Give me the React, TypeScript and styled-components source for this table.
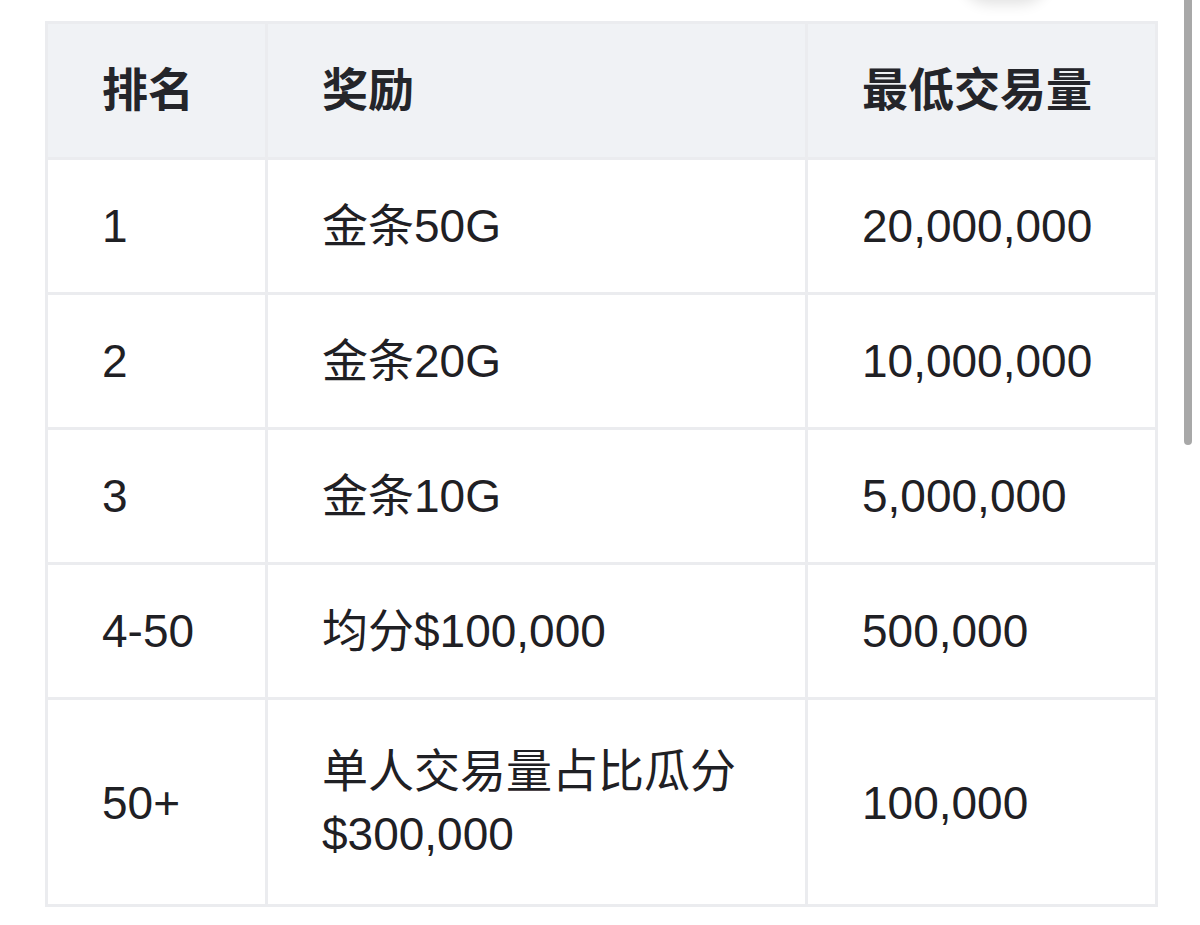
import React from 'react';
import styled, {createGlobalStyle} from 'styled-components';

const GlobalStyle = createGlobalStyle`
    html, body {
        margin: 0;
        padding: 0;
        background: #ffffff;
    }
    body {
        font-family: "Liberation Sans", "Noto Sans CJK SC", sans-serif;
        color: #1f2024;
    }
`;

const Page = styled.div`
    position: relative;
    width: 1200px;
    height: 925px;
    overflow: hidden;
    padding: 21px 0 0 45px;
    box-sizing: border-box;
`;

const Table = styled.table`
    width: 1110px;
    border-collapse: collapse;
    border: 3px solid #ebecef;
    table-layout: fixed;
`;

const Col = styled.col<{ $width: number }>`
    width: ${p => p.$width}px;
`;

const HeadCell = styled.th`
    box-sizing: border-box;
    background: #f0f2f5;
    border: 3px solid #ebecef;
    padding: 36px 0 36px 54px;
    text-align: left;
    font-size: 46px;
    font-weight: 700;
    line-height: 61px;
    color: #24252a;
    white-space: nowrap;
`;

const Cell = styled.td<{ $tall?: boolean }>`
    box-sizing: border-box;
    border: 3px solid #ebecef;
    padding: ${p => (p.$tall ? '40px' : '36px')} 20px ${p => (p.$tall ? '38px' : '36px')} 54px;
    font-size: 46px;
    font-weight: 400;
    line-height: ${p => (p.$tall ? '63px' : '60px')};
    color: #1f2024;
    vertical-align: middle;
    white-space: nowrap;
`;

// barra de desplazamiento superpuesta (como en la captura)
const ScrollThumb = styled.div`
    position: absolute;
    top: -6px;
    left: 1184px;
    width: 8px;
    height: 451px;
    border-radius: 4px;
    background: #a8a8a8;
`;

// sombra del botón flotante cortado arriba
const FloatShadow = styled.div`
    position: absolute;
    top: -60px;
    left: 960px;
    width: 90px;
    height: 60px;
    border-radius: 45px;
    background: #ffffff;
    box-shadow: 0 4px 14px rgba(0, 0, 0, 0.12);
`;

const rows = [
    {rank: '1', reward: ['金条50G'], volume: '20,000,000'},
    {rank: '2', reward: ['金条20G'], volume: '10,000,000'},
    {rank: '3', reward: ['金条10G'], volume: '5,000,000'},
    {rank: '4-50', reward: ['均分$100,000'], volume: '500,000'},
    {rank: '50+', reward: ['单人交易量占比瓜分', '$300,000'], volume: '100,000'},
];

const App: React.FC = () => {
    return (
        <Page>
            <GlobalStyle />
            <FloatShadow />
            <Table>
                <colgroup>
                    <Col $width={220} />
                    <Col $width={540} />
                    <Col $width={350} />
                </colgroup>
                <thead>
                    <tr>
                        <HeadCell>排名</HeadCell>
                        <HeadCell>奖励</HeadCell>
                        <HeadCell>最低交易量</HeadCell>
                    </tr>
                </thead>
                <tbody>
                    {rows.map(row => {
                        const tall = row.reward.length > 1;
                        return (
                            <tr key={row.rank}>
                                <Cell $tall={tall}>{row.rank}</Cell>
                                <Cell $tall={tall}>
                                    {row.reward.map((line, i) => (
                                        <React.Fragment key={line}>
                                            {i > 0 && <br />}
                                            {line}
                                        </React.Fragment>
                                    ))}
                                </Cell>
                                <Cell $tall={tall}>{row.volume}</Cell>
                            </tr>
                        );
                    })}
                </tbody>
            </Table>
            <ScrollThumb />
        </Page>
    );
};

export default App;
